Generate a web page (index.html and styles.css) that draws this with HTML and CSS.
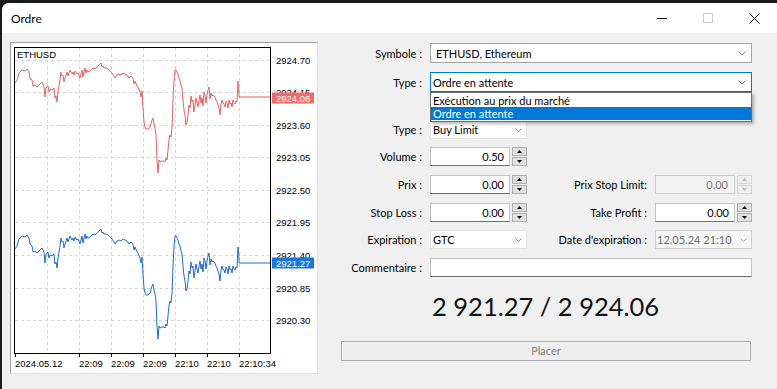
FILE: index.html
```html
<!DOCTYPE html>
<html lang="fr">
<head>
<meta charset="utf-8">
<title>Ordre</title>
<link rel="stylesheet" href="styles.css">
</head>
<body>
<div class="window">
  <div class="titlebar">
    <span class="title">Ordre</span>
    <div class="controls">
      <span class="ctl"><svg width="10" height="10" viewBox="0 0 10 10"><line x1="0" y1="5.5" x2="10" y2="5.5" stroke="#000" stroke-width="1"/></svg></span>
      <span class="ctl"><svg width="10" height="10" viewBox="0 0 10 10"><rect x="0.5" y="0.5" width="9" height="9" fill="none" stroke="#c8c8c8" stroke-width="1"/></svg></span>
      <span class="ctl"><svg width="11" height="11" viewBox="0 0 11 11"><path d="M0.5 0.5 L10.5 10.5 M10.5 0.5 L0.5 10.5" stroke="#000" stroke-width="1" fill="none"/></svg></span>
    </div>
  </div>
  <div class="content">
    <div class="chart">
      <svg width="306" height="330" viewBox="11 43 306 330" xmlns="http://www.w3.org/2000/svg">
        <g class="grid" stroke="#d4d4d4" stroke-width="1" stroke-dasharray="3 3">
          <line x1="15" y1="60.5" x2="270" y2="60.5"/>
          <line x1="15" y1="92.5" x2="270" y2="92.5"/>
          <line x1="15" y1="125.5" x2="270" y2="125.5"/>
          <line x1="15" y1="157.5" x2="270" y2="157.5"/>
          <line x1="15" y1="190.5" x2="270" y2="190.5"/>
          <line x1="15" y1="222.5" x2="270" y2="222.5"/>
          <line x1="15" y1="255.5" x2="270" y2="255.5"/>
          <line x1="15" y1="288.5" x2="270" y2="288.5"/>
          <line x1="15" y1="320.5" x2="270" y2="320.5"/>
          <line x1="47.5" y1="48" x2="47.5" y2="353"/>
          <line x1="79.5" y1="48" x2="79.5" y2="353"/>
          <line x1="111.5" y1="48" x2="111.5" y2="353"/>
          <line x1="143.5" y1="48" x2="143.5" y2="353"/>
          <line x1="175.5" y1="48" x2="175.5" y2="353"/>
          <line x1="207.5" y1="48" x2="207.5" y2="353"/>
          <line x1="239.5" y1="48" x2="239.5" y2="353"/>
        </g>
        <polyline id="ask" fill="none" stroke="#e8605f" stroke-width="1" points="15,83 17,80 19,73 22,70 25,71 27,69 29,72 30,78 32,80 33,86 35,85 37,87 40,84 42,82 44,86 45,97 46,88 48,86 49,92 50,89 52,90 54,88 55,98 56,96 57,102 58,92 60,80 61,72 62,76 63,75 64,82 65,78 67,72 68,76 70,70 72,74 73,72 74,75 75,71 77,74 78,73 80,78 81,74 82,70 83,77 84,72 85,68 86,73 87,70 88,72 90,71 91,70 93,68 95,69 97,67 99,65 101,63 102,67 103,66 104,68 106,68 108,69 110,71 112,73 114,76 115,78 117,75 119,74 121,75 123,73 125,74 127,75 129,78 131,76 133,78 134,84 135,81 137,86 138,87 139,90 140,92 141,97 142,91 143,108 144,122 145,127 146,129 148,129 150,127 152,120 153,118 154,124 155,128 156,135 157,160 158,173 159,160 160,162 162,161 164,161 165,162 166,158 167,160 168,150 169,140 170,135 171,137 172,128 173,100 174,80 175,70 176,70 177,72 178,74 179,78 180,80 181,85 182,88 183,100 184,110 185,115 186,125 187,123 188,115 189,105 190,108 191,96 192,102 193,100 194,112 195,105 196,98 197,103 198,107 199,100 200,95 201,103 202,98 203,106 204,92 205,95 206,103 207,95 208,90 209,87 210,99 211,93 212,96 213,95 214,96 215,97 216,100 217,102 218,105 219,108 220,115 221,104 222,100 223,103 224,104 225,107 226,101 227,103 228,108 229,100 230,104 231,103 232,107 233,100 234,103 235,104 236,101 237,102 238,81 239,92 239,97 270,97"/>
        <polyline fill="none" stroke="#1f6ad6" stroke-width="1" transform="translate(0,166)" points="15,83 17,80 19,73 22,70 25,71 27,69 29,72 30,78 32,80 33,86 35,85 37,87 40,84 42,82 44,86 45,97 46,88 48,86 49,92 50,89 52,90 54,88 55,98 56,96 57,102 58,92 60,80 61,72 62,76 63,75 64,82 65,78 67,72 68,76 70,70 72,74 73,72 74,75 75,71 77,74 78,73 80,78 81,74 82,70 83,77 84,72 85,68 86,73 87,70 88,72 90,71 91,70 93,68 95,69 97,67 99,65 101,63 102,67 103,66 104,68 106,68 108,69 110,71 112,73 114,76 115,78 117,75 119,74 121,75 123,73 125,74 127,75 129,78 131,76 133,78 134,84 135,81 137,86 138,87 139,90 140,92 141,97 142,91 143,108 144,122 145,127 146,129 148,129 150,127 152,120 153,118 154,124 155,128 156,135 157,160 158,173 159,160 160,162 162,161 164,161 165,162 166,158 167,160 168,150 169,140 170,135 171,137 172,128 173,100 174,80 175,70 176,70 177,72 178,74 179,78 180,80 181,85 182,88 183,100 184,110 185,115 186,125 187,123 188,115 189,105 190,108 191,96 192,102 193,100 194,112 195,105 196,98 197,103 198,107 199,100 200,95 201,103 202,98 203,106 204,92 205,95 206,103 207,95 208,90 209,87 210,99 211,93 212,96 213,95 214,96 215,97 216,100 217,102 218,105 219,108 220,115 221,104 222,100 223,103 224,104 225,107 226,101 227,103 228,108 229,100 230,104 231,103 232,107 233,100 234,103 235,104 236,101 237,102 238,81 239,92 239,97 270,97"/>
        <rect x="14.5" y="47.5" width="256" height="306" fill="none" stroke="#000" stroke-width="1"/>
        <g stroke="#000" stroke-width="1">
          <line x1="15.5" y1="354" x2="15.5" y2="357"/>
          <line x1="79.5" y1="354" x2="79.5" y2="357"/>
          <line x1="111.5" y1="354" x2="111.5" y2="357"/>
          <line x1="143.5" y1="354" x2="143.5" y2="357"/>
          <line x1="175.5" y1="354" x2="175.5" y2="357"/>
          <line x1="207.5" y1="354" x2="207.5" y2="357"/>
          <line x1="239.5" y1="354" x2="239.5" y2="357"/>
        </g>
        <g class="axis">
          <text x="17" y="57.5">ETHUSD</text>
          <text x="276" y="63.5">2924.70</text>
          <text x="276" y="96">2924.15</text>
          <text x="276" y="128.5">2923.60</text>
          <text x="276" y="161">2923.05</text>
          <text x="276" y="194">2922.50</text>
          <text x="276" y="226">2921.95</text>
          <text x="276" y="259">2921.40</text>
          <text x="276" y="292">2920.85</text>
          <text x="276" y="324">2920.30</text>
          <text x="15" y="366.5">2024.05.12</text>
          <text x="79" y="366.5">22:09</text>
          <text x="111" y="366.5">22:09</text>
          <text x="143" y="366.5">22:09</text>
          <text x="175" y="366.5">22:10</text>
          <text x="207" y="366.5">22:10</text>
          <text x="239" y="366.5">22:10:34</text>
        </g>
        <rect x="272" y="92.5" width="42" height="11" fill="#f26a6a"/>
        <text class="tag" x="276" y="101.5">2924.06</text>
        <rect x="272" y="257.5" width="42" height="11" fill="#1b74e4"/>
        <text class="tag" x="276" y="266.5">2921.27</text>
      </svg>
    </div>

    <div class="form">
      <div class="row r-symbole">
        <span class="label">Symbole :</span>
        <div class="select wide pad5"><span>ETHUSD, Ethereum</span><svg class="chev" width="8" height="5" viewBox="0 0 8 5"><polyline points="0.5,0.5 4,4 7.5,0.5" fill="none" stroke="#8a8a8a"/></svg></div>
      </div>
      <div class="row r-type">
        <span class="label">Type :</span>
        <div class="select wide focused">
          <span>Ordre en attente</span><svg class="chev" width="8" height="5" viewBox="0 0 8 5"><polyline points="0.5,0.5 4,4 7.5,0.5" fill="none" stroke="#6a6a6a"/></svg>
          <ul class="dropdown">
            <li>Exécution au prix du marché</li>
            <li class="selected">Ordre en attente</li>
          </ul>
        </div>
      </div>
      <div class="row r-type2">
        <span class="label">Type :</span>
        <div class="select flat"><span>Buy Limit</span><svg class="chev" width="7" height="4" viewBox="0 0 7 4"><polyline points="0.5,0.5 3.5,3.5 6.5,0.5" fill="none" stroke="#8a8a8a"/></svg></div>
      </div>
      <div class="row r-next">
        <span class="label">Volume :</span>
        <div class="spinfield">
          <div class="edit">0.50</div>
          <div class="spin"><span><svg width="5" height="3" viewBox="0 0 5 3"><polygon points="0,3 2.5,0 5,3"/></svg></span><span><svg width="5" height="3" viewBox="0 0 5 3"><polygon points="0,0 2.5,3 5,0"/></svg></span></div>
        </div>
      </div>
      <div class="row r-next9">
        <span class="label">Prix :</span>
        <div class="spinfield">
          <div class="edit">0.00</div>
          <div class="spin"><span><svg width="5" height="3" viewBox="0 0 5 3"><polygon points="0,3 2.5,0 5,3"/></svg></span><span><svg width="5" height="3" viewBox="0 0 5 3"><polygon points="0,0 2.5,3 5,0"/></svg></span></div>
        </div>
        <span class="label">Prix Stop Limit:</span>
        <div class="spinfield disabled">
          <div class="edit">0.00</div>
          <div class="spin"><span><svg width="5" height="3" viewBox="0 0 5 3"><polygon points="0,3 2.5,0 5,3"/></svg></span><span><svg width="5" height="3" viewBox="0 0 5 3"><polygon points="0,0 2.5,3 5,0"/></svg></span></div>
        </div>
      </div>
      <div class="row r-next9">
        <span class="label">Stop Loss :</span>
        <div class="spinfield">
          <div class="edit">0.00</div>
          <div class="spin"><span><svg width="5" height="3" viewBox="0 0 5 3"><polygon points="0,3 2.5,0 5,3"/></svg></span><span><svg width="5" height="3" viewBox="0 0 5 3"><polygon points="0,0 2.5,3 5,0"/></svg></span></div>
        </div>
        <span class="label">Take Profit :</span>
        <div class="spinfield">
          <div class="edit">0.00</div>
          <div class="spin"><span><svg width="5" height="3" viewBox="0 0 5 3"><polygon points="0,3 2.5,0 5,3"/></svg></span><span><svg width="5" height="3" viewBox="0 0 5 3"><polygon points="0,0 2.5,3 5,0"/></svg></span></div>
        </div>
      </div>
      <div class="row r-next">
        <span class="label">Expiration :</span>
        <div class="select flat"><span>GTC</span><svg class="chev" width="7" height="4" viewBox="0 0 7 4"><polyline points="0.5,0.5 3.5,3.5 6.5,0.5" fill="none" stroke="#8a8a8a"/></svg></div>
        <span class="label">Date d'expiration :</span>
        <div class="select flat disabled"><span>12.05.24 21:10</span><svg class="chev" width="7" height="4" viewBox="0 0 7 4"><polyline points="0.5,0.5 3.5,3.5 6.5,0.5" fill="none" stroke="#b0b0b0"/></svg></div>
      </div>
      <div class="row r-next9">
        <span class="label">Commentaire :</span>
        <div class="edit wide"></div>
      </div>
      <div class="price">2 921.27 / 2 924.06</div>
      <div class="button">Placer</div>
    </div>
  </div>
</div>
</body>
</html>
```

FILE: styles.css
```css
* { box-sizing: border-box; }
html, body { margin: 0; padding: 0; }
body {
  width: 777px;
  height: 389px;
  overflow: hidden;
  background: #1b1b1b;
  font-family: Lato, "Liberation Sans", sans-serif;
  font-size: 11px;
  color: #000;
}
.window {
  margin: 3px 0 0 2px;
  height: 386px;
  background: #f0f0f0;
  border-top-left-radius: 7px;
  overflow: hidden;
}
.titlebar {
  height: 30px;
  background: #fff;
  display: flex;
  align-items: center;
  justify-content: space-between;
  padding-left: 9px;
}
.title { font-size: 12px; }
.controls { display: flex; height: 30px; }
.ctl {
  width: 46px;
  height: 30px;
  display: flex;
  align-items: center;
  justify-content: center;
}
.ctl svg { display: block; }
.content {
  display: flex;
  padding: 9px 0 0 8px;
}
.chart {
  width: 308px;
  height: 332px;
  background: #fff;
  border: 1px solid;
  border-color: #a0a0a0 #e3e3e3 #e3e3e3 #a0a0a0;
}
.chart svg { display: block; }
.axis text {
  font-family: "Liberation Sans", Arial, sans-serif;
  font-size: 9.5px;
  fill: #000;
}
.tag {
  font-family: "Liberation Sans", Arial, sans-serif;
  font-size: 9.5px;
  fill: #fff;
}
.form {
  margin-left: 22px;
  width: 412px;
  padding-top: 1px;
}
.row {
  display: grid;
  grid-template-columns: 82px 97px 112px 97px;
  column-gap: 8px;
  height: 19px;
  align-items: center;
}
.r-symbole, .r-type { height: 20px; }
.r-type { margin-top: 9px; position: relative; z-index: 2; }
.r-type2 { margin-top: 28px; }
.r-next { margin-top: 8px; }
.r-next9 { margin-top: 9px; }
.label {
  text-align: right;
  white-space: nowrap;
}
.select {
  height: 100%;
  background: #fff;
  border: 1px solid #a6a6a6;
  display: flex;
  align-items: center;
  justify-content: space-between;
  padding: 0 4px 0 2px;
  white-space: nowrap;
  position: relative;
}
.select.wide { grid-column: 2 / 5; padding-right: 5px; }
.select.pad5 { padding-left: 5px; }
.select.focused { border-color: #0078d7; }
.select.flat { border-color: #e2e2e2; }
.select.disabled { background: #f6f6f6; border-color: #cfcfcf; color: #6d6d6d; padding-left: 1px; }
.chev { display: block; flex: none; }
.dropdown {
  position: absolute;
  left: -1px;
  right: -1px;
  top: 19px;
  margin: 0;
  padding: 1px 0;
  list-style: none;
  background: #fff;
  border: 1px solid #6e6e6e;
  box-shadow: 2px 2px 3px rgba(0, 0, 0, 0.28);
}
.dropdown li {
  height: 13px;
  line-height: 13px;
  padding-left: 2px;
}
.dropdown li.selected {
  background: #0078d7;
  color: #fff;
}
.spinfield {
  display: flex;
  gap: 2px;
  height: 100%;
}
.edit {
  height: 100%;
  flex: 1;
  background: #fff;
  border: 1px solid #c2c2c2;
  border-bottom-color: #707070;
  text-align: right;
  padding-right: 5px;
  line-height: 17px;
}
.edit.wide { grid-column: 2 / 5; }
.spin {
  width: 15px;
  display: flex;
  flex-direction: column;
  gap: 1px;
}
.spin span {
  flex: 1;
  display: flex;
  align-items: center;
  justify-content: center;
  background: #e1e1e1;
  border: 1px solid #adadad;
}
.spin svg { display: block; fill: #000; }
.spinfield.disabled .edit {
  background: #f4f4f4;
  border-color: #cccccc;
  color: #7a7a7a;
  padding-right: 6px;
}
.spinfield.disabled .spin span { background: #f0f0f0; border-color: #d6d6d6; }
.spinfield.disabled .spin svg { fill: #b5b5b5; }
.price {
  margin-top: 14px;
  padding-left: 92px;
  font-size: 25.5px;
  line-height: 31px;
  color: #111;
  white-space: nowrap;
}
.button {
  margin: 19px 0 0 1px;
  width: 410px;
  height: 20px;
  border: 1px solid #adadad;
  background: #efefef;
  color: #838383;
  text-align: center;
  line-height: 18px;
}
```
